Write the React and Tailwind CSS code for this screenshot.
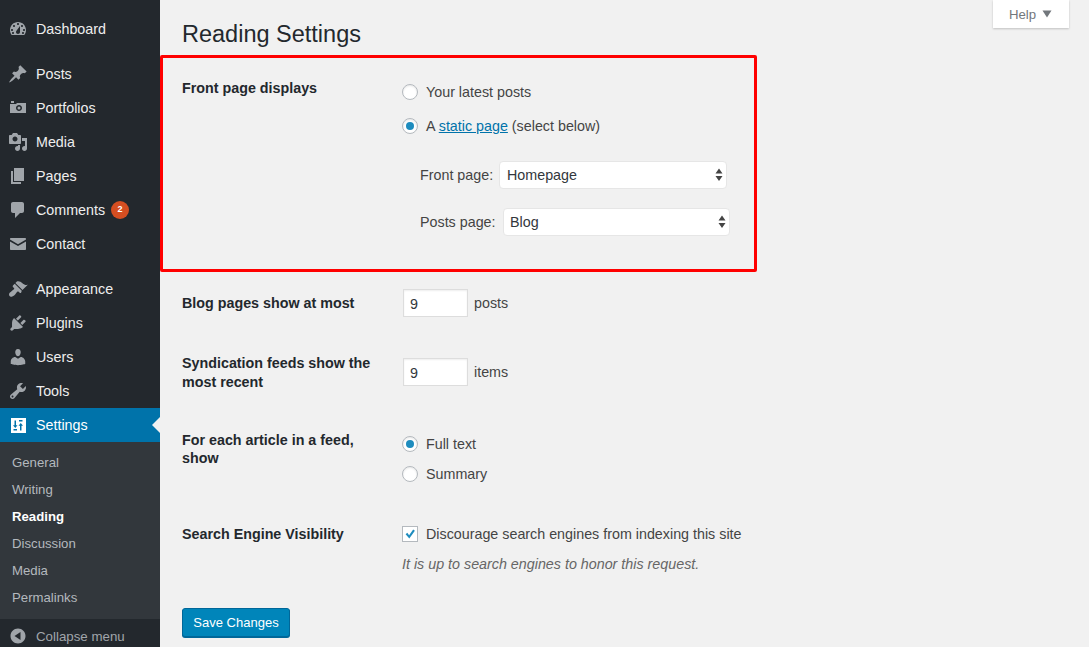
import React from "react";

const paths = {
  dashboard: "M3.76 16h12.48c1.1-1.37 1.76-3.11 1.76-5 0-4.42-3.58-8-8-8s-8 3.58-8 8c0 1.89.66 3.63 1.76 5zM10 4c.55 0 1 .45 1 1s-.45 1-1 1-1-.45-1-1 .45-1 1-1zM6 6c.55 0 1 .45 1 1s-.45 1-1 1-1-.45-1-1 .45-1 1-1zm8 0c.55 0 1 .45 1 1s-.45 1-1 1-1-.45-1-1 .45-1 1-1zm-5.37 5.55L12 7v6c0 1.1-.9 2-2 2s-2-.9-2-2c0-.57.24-1.08.63-1.45zM4 10c.55 0 1 .45 1 1s-.45 1-1 1-1-.45-1-1 .45-1 1-1zm12 0c.55 0 1 .45 1 1s-.45 1-1 1-1-.45-1-1 .45-1 1-1zM5 13c.55 0 1 .45 1 1s-.45 1-1 1-1-.45-1-1 .45-1 1-1zm10 0c.55 0 1 .45 1 1s-.45 1-1 1-1-.45-1-1 .45-1 1-1z",
  pin: "M10.44 3.02l1.82-1.82 6.36 6.35-1.83 1.82c-1.05-.68-2.48-.57-3.41.36l-.75.75c-.92.93-1.04 2.35-.35 3.41l-1.83 1.82-2.41-2.41-2.8 2.79c-.42.42-3.38 2.71-3.8 2.29s1.86-3.39 2.28-3.81l2.79-2.79L4.1 9.36l1.83-1.82c1.05.69 2.48.57 3.4-.36l.75-.75c.93-.92 1.05-2.35.36-3.41z",
  portfolio: "M6 5V3H3v2h3zm12 10V5H9L8 6H2v9h16zm-7-8c1.66 0 3 1.34 3 3s-1.34 3-3 3-3-1.34-3-3 1.34-3 3-3zm0 1.5a1.5 1.5 0 1 0 0 3 1.5 1.5 0 0 0 0-3z",
  media: "M13 11V4c0-.55-.45-1-1-1h-1.67L9 1H5L3.67 3H2c-.55 0-1 .45-1 1v7c0 .55.45 1 1 1h10c.55 0 1-.45 1-1zM7 4.5c1.38 0 2.5 1.12 2.5 2.5S8.38 9.5 7 9.5 4.5 8.38 4.5 7 5.62 4.5 7 4.5zM14 6h5v10.5c0 1.38-1.12 2.5-2.5 2.5S14 17.88 14 16.5s1.12-2.5 2.5-2.5c.17 0 .34.02.5.05V9h-3V6zm-4 8.05V13h2v3.5c0 1.38-1.12 2.5-2.5 2.5S7 17.88 7 16.5 8.12 14 9.5 14c.17 0 .34.02.5.05z",
  pages: "M6 15V2h10v13H6zm-1 1h8v2H3V5h2v11z",
  comments: "M5 2h9c1.1 0 2 .9 2 2v7c0 1.1-.9 2-2 2h-2l-5 5v-5H5c-1.1 0-2-.9-2-2V4c0-1.1.9-2 2-2z",
  email: "M3 4h14c.55 0 1 .45 1 1v.6l-8 4.6-8-4.6V5c0-.55.45-1 1-1zM2 7.4l8 4.6 8-4.6V15c0 .55-.45 1-1 1H3c-.55 0-1-.45-1-1z",
  brush: "M14.48 11.06L7.41 3.99l1.5-1.5c.5-.56 2.3-.47 3.51.32 1.21.8 1.43 1.28 2.91 2.1 1.18.64 2.45 1.26 4.45.85zm-.71.71L6.7 4.7 4.93 6.47c-.39.39-.39 1.02 0 1.41l1.06 1.06c.39.39.39 1.03 0 1.42-.6.6-1.43 1.11-2.21 1.69-.35.26-.7.53-1.01.84C1.43 13.23.93 14.84 1.02 15.78c.1.94.84 1.76 1.77 1.86.94.1 2.55-.41 3.9-1.75.31-.31.58-.66.84-1.01.58-.78 1.09-1.61 1.69-2.21.39-.39 1.03-.39 1.42 0l1.06 1.06c.39.39 1.02.39 1.41 0z",
  plugin: "M13.11 4.36L9.87 7.6 8 5.73l3.24-3.24c.35-.34 1.05-.2 1.56.32.52.51.66 1.21.31 1.55zm-8 1.77l.91-1.12 9.01 9.01-1.19.84c-.71.71-2.63 1.16-3.82 1.16H6.14L4.9 17.26c-.59.59-1.54.59-2.12 0-.59-.58-.59-1.53 0-2.12l1.24-1.24v-3.88c0-1.13.4-3.19 1.09-3.89zm7.26 3.97l3.24-3.24c.34-.35 1.04-.21 1.55.31.52.51.66 1.21.31 1.55l-3.24 3.25z",
  users: "M10 9.25c-2.27 0-2.73-3.44-2.73-3.44C7 4.02 7.82 2 9.97 2c2.16 0 2.98 2.02 2.71 3.81 0 0-.41 3.44-2.68 3.44zm0 2.57L12.72 10c2.39 0 4.52 2.33 4.52 4.53v2.49s-3.65 1.13-7.24 1.13c-3.65 0-7.24-1.13-7.24-1.13v-2.49c0-2.25 1.94-4.48 4.47-4.48z",
  tools: "M16.68 9.77c-1.34 1.34-3.3 1.67-4.95.99l-5.41 6.52c-.99.99-2.59.99-3.58 0s-.99-2.59 0-3.57l6.52-5.42c-.68-1.65-.35-3.61.99-4.95 1.28-1.28 3.12-1.62 4.72-1.06l-2.89 2.89 2.82 2.82 2.86-2.87c.53 1.58.18 3.39-1.08 4.65zM3.81 16.21c.4.39 1.04.39 1.43 0 .4-.4.4-1.04 0-1.43-.39-.4-1.03-.4-1.43 0-.39.39-.39 1.03 0 1.43z",
  settings: "M3 3h15v15H3zM6.5 5.5v4.7H5L7.25 13l2.25-2.8H8v-4.7zM13.5 15.5v-4.7H15L12.75 8l-2.25 2.8H12v4.7zM5.5 14h3.5v1.5H5.5zM11 5h3.5v1.5H11z",
  collapse: "M10 2.5c-4.14 0-7.5 3.36-7.5 7.5s3.36 7.5 7.5 7.5 7.5-3.36 7.5-7.5-3.36-7.5-7.5-7.5zM12.5 14l-6-4 6-4v8z",
};

function Icon({ name, className = "fill-[#a0a5aa]" }) {
  return (
    <svg viewBox="0 0 20 20" className={"w-5 h-5 shrink-0 " + className}>
      <path d={paths[name]} fillRule="evenodd" />
    </svg>
  );
}

function MenuItem({ icon, label, badge }) {
  return (
    <div className="h-[34px] flex items-center pl-2 text-[14.3px] text-[#eeeeee]">
      <Icon name={icon} />
      <span className="ml-2 pt-[2px]">{label}</span>
      {badge && (
        <span className="ml-[6px] w-[18px] h-[18px] rounded-full bg-[#d54e21] text-white text-[9px] font-bold flex items-center justify-center">
          {badge}
        </span>
      )}
    </div>
  );
}

function Sidebar() {
  const sub = ["General", "Writing", "Reading", "Discussion", "Media", "Permalinks"];
  return (
    <aside className="w-40 shrink-0 h-full bg-[#23282d] flex flex-col pt-3 overflow-hidden *:shrink-0">
      <MenuItem icon="dashboard" label="Dashboard" />
      <div className="h-[11px]" />
      <MenuItem icon="pin" label="Posts" />
      <MenuItem icon="portfolio" label="Portfolios" />
      <MenuItem icon="media" label="Media" />
      <MenuItem icon="pages" label="Pages" />
      <MenuItem icon="comments" label="Comments" badge="2" />
      <MenuItem icon="email" label="Contact" />
      <div className="h-[11px]" />
      <MenuItem icon="brush" label="Appearance" />
      <MenuItem icon="plugin" label="Plugins" />
      <MenuItem icon="users" label="Users" />
      <MenuItem icon="tools" label="Tools" />
      <div className="relative h-[34px] flex items-center pl-2 bg-[#0073aa] text-[14.3px] text-white">
        <Icon name="settings" className="fill-white" />
        <span className="ml-2 pt-[2px]">Settings</span>
        <span className="absolute right-0 top-[9px] w-0 h-0 border-y-8 border-y-transparent border-r-8 border-r-[#f1f1f1]" />
      </div>
      <div className="bg-[#32373c] pt-[7px] pb-2">
        {sub.map((s) => (
          <div
            key={s}
            className={
              "h-[27px] flex items-center pl-3 text-[13.2px] " +
              (s === "Reading" ? "text-white font-bold" : "text-[#b4b9be]")
            }
          >
            {s}
          </div>
        ))}
      </div>
      <div className="flex items-center pl-2 pt-[6px] text-[13.3px] text-[#a0a5aa]">
        <Icon name="collapse" />
        <span className="ml-2 pt-[2px]">Collapse menu</span>
      </div>
    </aside>
  );
}

function Radio({ checked }) {
  return (
    <span className="w-4 h-4 rounded-full bg-white border border-[#b4b9be] shadow-[inset_0_1px_2px_rgba(0,0,0,0.1)] flex items-center justify-center shrink-0">
      {checked && <span className="w-2 h-2 rounded-full bg-[#1e8cbe]" />}
    </span>
  );
}

function Choice({ checked, children, className = "" }) {
  return (
    <label className={"flex items-center gap-2 h-5 text-[14.3px] text-[#444444] " + className}>
      <Radio checked={checked} />
      <span className="pt-[2px]">{children}</span>
    </label>
  );
}

function Select({ value, className, padClass = "pl-[7px]" }) {
  return (
    <div className={"relative h-7 " + className}>
      <select
        defaultValue={value}
        className={"w-full h-full appearance-none bg-white rounded border border-[#e6e6e6] pt-[2px] text-[14.3px] text-[#32373c] outline-none " + padClass}
      >
        <option>{value}</option>
      </select>
      <svg viewBox="0 0 8 14" className="absolute right-1 top-[7px] w-2 h-3.5 fill-[#444444]">
        <path d="M4 0.5 L7.5 5.5 H0.5 Z M4 13 L0.5 8 H7.5 Z" />
      </svg>
    </div>
  );
}

function NumberBox({ value }) {
  return (
    <input
      defaultValue={value}
      className="w-[65px] h-7 ml-px bg-white border border-[#dddddd] pl-[6px] pt-[2px] text-[14.3px] text-[#32373c] shadow-[inset_0_1px_2px_rgba(0,0,0,0.07)] outline-none"
    />
  );
}

function Row({ label, className = "", labelClass = "leading-[19px]", children }) {
  return (
    <div className={"grid grid-cols-[220px_1fr] " + className}>
      <div className={"text-[14.3px] font-bold text-[#23282d] pr-4 " + labelClass}>{label}</div>
      <div>{children}</div>
    </div>
  );
}

export default function App() {
  return (
    <div
      className="w-[1089px] h-[647px] flex bg-[#f1f1f1] overflow-hidden"
      style={{ fontFamily: '"Liberation Sans", Arial, sans-serif' }}
    >
      <Sidebar />
      <main className="relative flex-1 flex flex-col">
        <div className="absolute left-[833px] top-0 w-[76px] h-7 bg-white shadow-[0_1px_2px_rgba(0,0,0,0.2)] flex items-center pl-4 text-[13.2px] text-[#72777c]">
          <span className="pt-[2px]">Help</span>
          <svg viewBox="0 0 10 8" className="w-2.5 h-2 ml-[6px] fill-[#72777c]">
            <path d="M0.5 0.5 H9.5 L5 7.5 Z" />
          </svg>
        </div>

        <h1 className="pl-[22px] pt-5 text-[23.5px] leading-[28px] text-[#23282d] h-[55px]">Reading Settings</h1>

        <section className="w-[597px] h-[217px] border-[3px] border-[#ff0000] rounded-[2px] pl-[19px] pt-[21px]">
          <Row label="Front page displays">
            <Choice className="mt-[3px]">Your latest posts</Choice>
            <Choice checked className="mt-[14px]">
              A <a className="text-[#0073aa] underline">static page</a> (select below)
            </Choice>
            <div className="mt-[25px] ml-[18px] flex items-center h-7">
              <span className="w-[79px] text-[14.3px] text-[#444444] pt-[2px]">Front page:</span>
              <Select value="Homepage" className="w-[228px]" />
            </div>
            <div className="mt-[19px] ml-[18px] flex items-center h-7">
              <span className="w-[83px] text-[14.3px] text-[#444444] pt-[2px]">Posts page:</span>
              <Select value="Blog" className="w-[227px]" padClass="pl-[6px]" />
            </div>
          </Row>
        </section>

        <div className="pl-[22px] flex flex-col">
          <Row label="Blog pages show at most" className="pt-[17px]" labelClass="leading-[19px] pt-[5px]">
            <div className="flex items-center gap-[6px] text-[14.3px] text-[#444444]">
              <NumberBox value="9" />
              <span className="pt-[2px]">posts</span>
            </div>
          </Row>
          <Row label="Syndication feeds show the most recent" className="pt-[37px]">
            <div className="flex items-center gap-[6px] text-[14.3px] text-[#444444] pt-1">
              <NumberBox value="9" />
              <span className="pt-[2px]">items</span>
            </div>
          </Row>
          <Row label="For each article in a feed, show" className="pt-[39px]" labelClass="leading-[18px]">
            <Choice checked className="mt-[3px]">Full text</Choice>
            <Choice className="mt-[10px]">Summary</Choice>
          </Row>
          <Row label="Search Engine Visibility" className="pt-[40px]" labelClass="leading-[19px] pt-px">
            <label className="flex items-center gap-2 h-5 text-[14.3px] text-[#444444]">
              <span className="w-4 h-4 bg-white border border-[#b4b9be] flex items-center justify-center shrink-0">
                <svg viewBox="0 0 16 16" className="w-4 h-4 fill-[#1e8cbe]">
                  <path d="M3 8.2l1.9-1.6L7 9.4l4.6-6.6 2 1.4L7.2 13z" />
                </svg>
              </span>
              <span className="pt-[2px]">Discourage search engines from indexing this site</span>
            </label>
            <p className="mt-[10px] text-[14.3px] leading-5 italic text-[#666666]">It is up to search engines to honor this request.</p>
          </Row>
          <div className="pt-[34px]">
            <button className="w-[108px] h-[29px] rounded-[3px] bg-[#0085ba] border border-[#006799] text-[13px] text-white shadow-[0_1px_0_#006799]">
              Save Changes
            </button>
          </div>
        </div>
      </main>
    </div>
  );
}
